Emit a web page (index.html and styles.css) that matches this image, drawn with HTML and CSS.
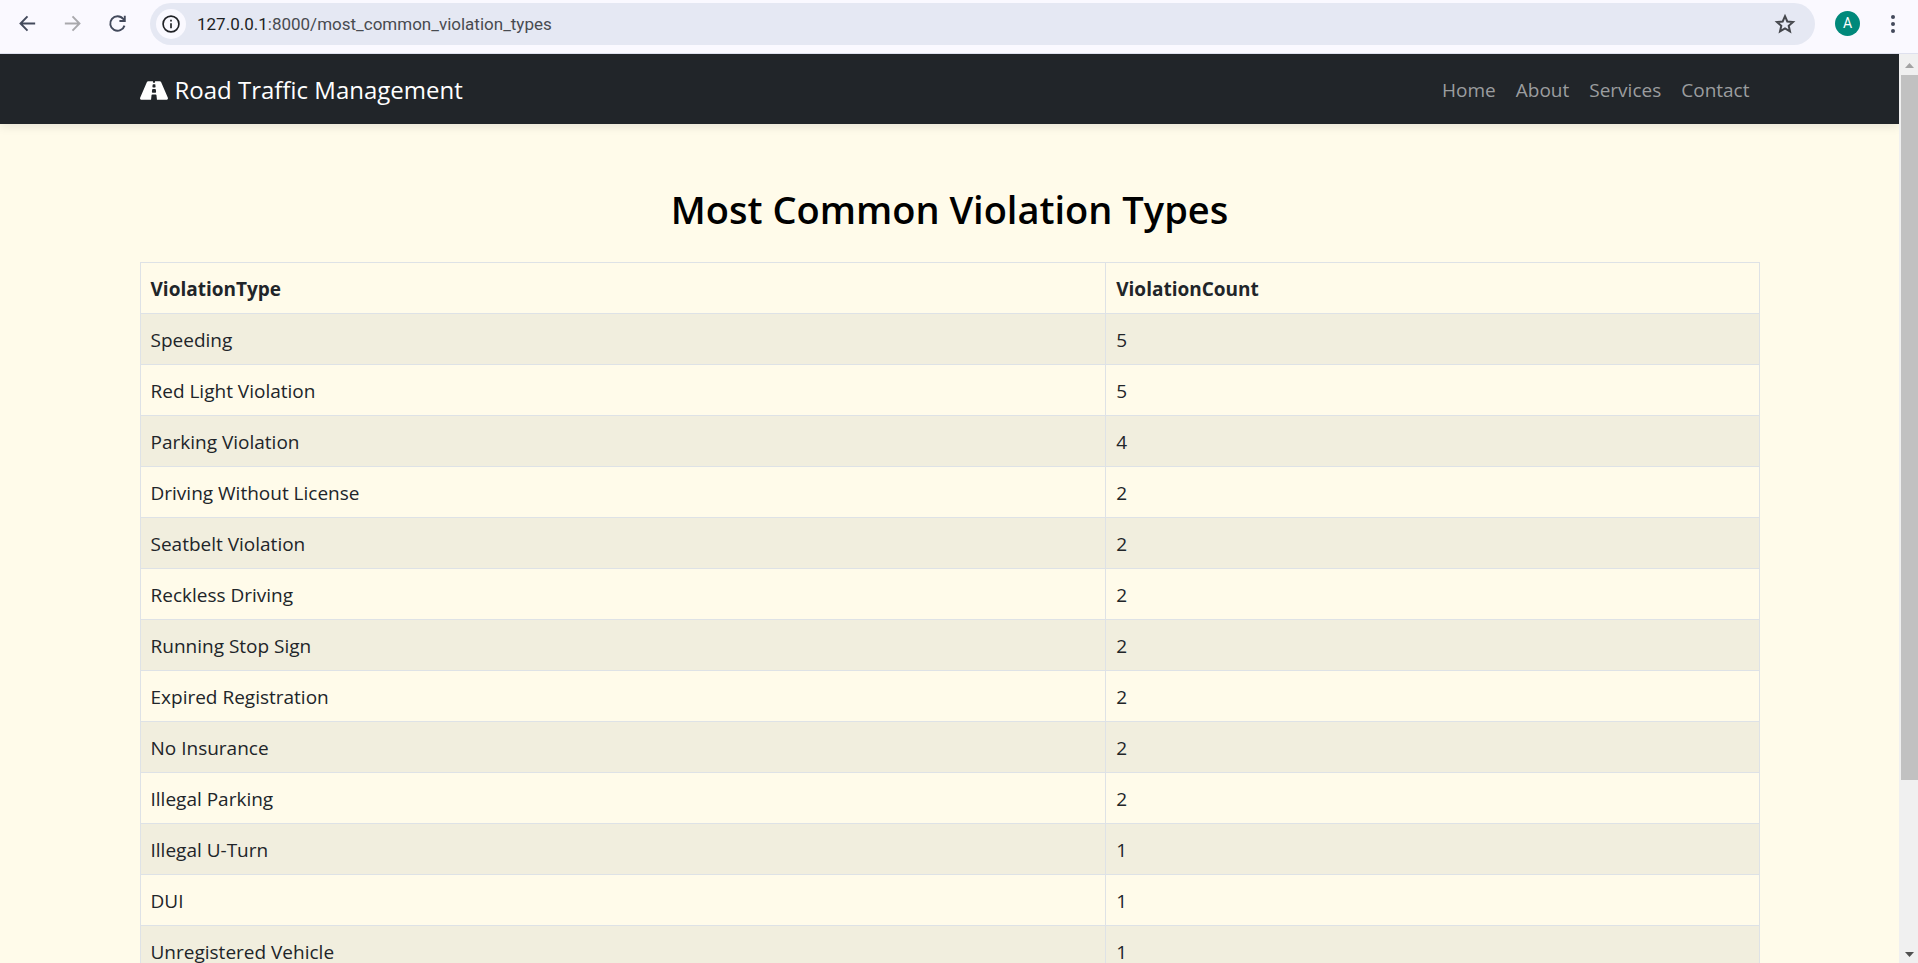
FILE: index.html
```html
<!DOCTYPE html>
<html lang="en">
<head>
<meta charset="utf-8">
<title>Most Common Violation Types</title>
<link rel="stylesheet" href="styles.css">
</head>
<body>
<div class="toolbar">
  <div class="toolbar-nav">
    <button class="tool" type="button" aria-label="Back"><svg viewBox="0 0 24 24"><path d="M20 12H5M12 4.5 4.7 12l7.3 7.5"/></svg></button>
    <button class="tool tool-off" type="button" aria-label="Forward"><svg viewBox="0 0 24 24"><path d="M4 12h15M12 4.500l7.300 7.500-7.300 7.500"/></svg></button>
    <button class="tool" type="button" aria-label="Reload"><svg viewBox="0 0 24 24"><path d="M19.300 14.200A7.600 7.600 0 1 1 18 7.300l1 1.200M19.600 4v5.400h-5.600"/></svg></button>
  </div>
  <div class="address">
    <button class="site-info" type="button" aria-label="Site information"><svg viewBox="0 0 24 24"><circle cx="12" cy="12" r="9.500"/><path d="M12 11v6M12 7v2"/></svg></button>
    <a class="url" href="#"><span class="host">127.0.0.1</span>:8000/most_common_violation_types</a>
    <button class="star" type="button" aria-label="Bookmark"><svg viewBox="0 0 24 24"><path d="m12 4.200 2.300 5.300 5.700.5-4.300 3.800 1.300 5.600-5-3-5 3 1.300-5.600L4 10l5.700-.5z"/></svg></button>
  </div>
  <button class="avatar" type="button">A</button>
  <button class="menu" type="button" aria-label="Menu"><svg viewBox="0 0 6 20"><circle cx="3" cy="3" r="2"/><circle cx="3" cy="10" r="2"/><circle cx="3" cy="17" r="2"/></svg></button>
</div>
<div class="viewport">
  <div class="page">
    <nav class="navbar">
      <div class="container navbar-row">
        <a class="brand" href="#"><svg viewBox="0 0 576 384"><path transform="translate(0 -64)" d="M573.190 402.670l-139.790-320C428.430 71.290 417.600 64 405.680 64h-97.590l2.450 23.160c.5 4.720-3.210 8.840-7.960 8.840h-29.160c-4.750 0-8.460-4.120-7.960-8.840L267.910 64h-97.590c-11.930 0-22.760 7.290-27.730 18.670L2.800 402.670C-6.450 423.860 8.310 448 30.540 448h196.840l10.310-97.680c.86-8.140 7.720-14.320 15.910-14.320h68.800c8.190 0 15.050 6.180 15.910 14.320L348.620 448h196.840c22.230 0 36.990-24.140 27.730-45.330zM260.400 135.160a8 8 0 0 1 7.960-7.160h39.290c4.090 0 7.530 3.090 7.960 7.160l4.600 43.580c.75 7.090-4.810 13.260-11.930 13.260h-40.540c-7.130 0-12.680-6.170-11.930-13.260l4.590-43.580zM315.640 304h-55.290c-9.500 0-16.910-8.230-15.910-17.680l5.070-48c.86-8.140 7.720-14.320 15.910-14.320h45.150c8.190 0 15.050 6.180 15.910 14.320l5.070 48c1 9.450-6.410 17.680-15.910 17.680z"/></svg>Road Traffic Management</a>
        <div class="links">
          <a href="#">Home</a>
          <a href="#">About</a>
          <a href="#">Services</a>
          <a href="#">Contact</a>
        </div>
      </div>
    </nav>
    <main class="container content">
      <h1>Most Common Violation Types</h1>
      <table>
        <colgroup><col class="col-type"><col></colgroup>
        <thead><tr><th>ViolationType</th><th>ViolationCount</th></tr></thead>
        <tbody>
          <tr><td>Speeding</td><td>5</td></tr>
          <tr><td>Red Light Violation</td><td>5</td></tr>
          <tr><td>Parking Violation</td><td>4</td></tr>
          <tr><td>Driving Without License</td><td>2</td></tr>
          <tr><td>Seatbelt Violation</td><td>2</td></tr>
          <tr><td>Reckless Driving</td><td>2</td></tr>
          <tr><td>Running Stop Sign</td><td>2</td></tr>
          <tr><td>Expired Registration</td><td>2</td></tr>
          <tr><td>No Insurance</td><td>2</td></tr>
          <tr><td>Illegal Parking</td><td>2</td></tr>
          <tr><td>Illegal U-Turn</td><td>1</td></tr>
          <tr><td>DUI</td><td>1</td></tr>
          <tr><td>Unregistered Vehicle</td><td>1</td></tr>
        </tbody>
      </table>
    </main>
  </div>
  <div class="scrollbar">
    <svg class="arrow arrow-up" viewBox="0 0 9 5"><path d="M0 5 4.500 0 9 5z"/></svg>
    <div class="track"><div class="thumb"></div></div>
    <svg class="arrow" viewBox="0 0 9 5"><path d="M0 0h9L4.500 5z"/></svg>
  </div>
</div>
</body>
</html>
```
FILE: styles.css
```css
* { box-sizing: border-box; }
body {
  margin: 0;
  height: 100vh;
  display: flex;
  flex-direction: column;
  overflow: hidden;
  background: #fffbea;
  color: #212529;
  font: 19px/30px "Open Sans", "Noto Sans", sans-serif;
}
a { color: inherit; text-decoration: none; }
button { border: 0; padding: 0; background: none; font: inherit; color: inherit; }
svg { display: block; }

.toolbar {
  flex: none;
  display: flex;
  align-items: center;
  height: 54px;
  padding: 0 22px 6px 16px;
  background: #faf9ff;
  border-bottom: 1px solid #dfe1ee;
}
.toolbar-nav { display: flex; gap: 22px; margin-right: 21px; }
.tool svg { width: 23px; height: 23px; fill: none; stroke: #434a5c; stroke-width: 2; }
.tool-off svg { stroke: #a9a9ad; }
.address {
  flex: 1;
  display: flex;
  align-items: center;
  height: 42px;
  padding: 0 18px 0 6px;
  border-radius: 21px;
  background: #e5e8f3;
}
.site-info {
  display: grid;
  place-items: center;
  width: 30px;
  height: 30px;
  margin-right: 11px;
  border-radius: 50%;
  background: #faf9ff;
}
.site-info svg { width: 20px; height: 20px; fill: none; stroke: #202226; stroke-width: 2; }
.url { flex: 1; color: #484b50; font-family: Roboto, sans-serif; font-size: 17px; }
.host { color: #1d1f23; }
.star svg { width: 24px; height: 24px; fill: none; stroke: #45474c; stroke-width: 2; }
.avatar {
  width: 25px;
  height: 25px;
  margin: 0 30px 0 20px;
  border-radius: 50%;
  background: #00897b;
  color: #fff;
  font: 14px/25px Roboto, sans-serif;
}
.menu svg { width: 6px; height: 20px; fill: #434a5c; }

.viewport { flex: 1; min-height: 0; display: flex; }
.page { flex: 1; overflow: hidden; }
.container { max-width: 1650px; margin: 0 auto; padding: 0 15px; }
.navbar { padding: 11px 0 9px; background: #212529; box-shadow: 0 2px 10px rgba(0, 0, 0, 0.1); }
.navbar-row { display: flex; align-items: center; justify-content: space-between; height: 50px; }
.brand { display: flex; align-items: center; gap: 7px; color: #fff; font-size: 24px; }
.brand svg { width: 28px; height: 19px; fill: #fff; }
.links { display: flex; color: #9b9d9f; }
.links a { padding: 0 10px; }

.content { padding-top: 61px; }
h1 {
  margin: 0 0 29px;
  color: #000;
  font-size: 38px;
  font-weight: 600;
  line-height: 48px;
  text-align: center;
}
table { width: 100%; table-layout: fixed; border-collapse: collapse; }
.col-type { width: 59.65%; }
th, td { padding: 11px 10px 9px; border: 1px solid #dee2e6; text-align: left; }
th { font-weight: 700; }
tbody tr:nth-child(odd) { background: #f1eede; }

.scrollbar {
  flex: none;
  display: flex;
  flex-direction: column;
  align-items: center;
  width: 19px;
  padding: 9px 0 6px 2px;
  background: #f0f0f0;
}
.arrow { width: 9px; height: 5px; fill: #505050; }
.arrow-up { fill: #a3a3a3; }
.track { flex: 1; width: 100%; padding: 7px 0 10px; }
.thumb { height: 81.3%; background: #c1c1c1; }
```
